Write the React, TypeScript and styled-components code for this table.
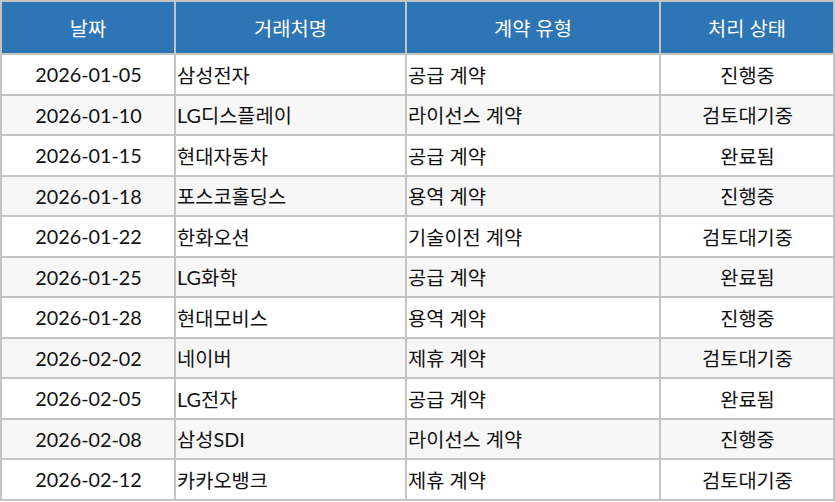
import React from 'react';
import styled, { createGlobalStyle } from 'styled-components';

const GlobalStyle = createGlobalStyle`
	html, body {
		margin: 0;
		padding: 0;
		background: #ffffff;
	}
	body {
		font-family: 'Lato', 'Noto Sans CJK KR', sans-serif;
	}
`;

const Table = styled.table`
	width: 835px;
	border-collapse: collapse;
	border: 2px solid #c4c4c4;
	table-layout: fixed;
	font-size: 19.8px;
	color: #111111;
`;

const HeadCell = styled.th`
	height: 51px;
	padding: 0;
	background: #2e75b6;
	color: #ffffff;
	font-weight: 400;
	font-size: 19.8px;
	text-align: center;
	border: 2px solid #c4c4c4;
`;

const Row = styled.tr<{ $striped: boolean }>`
	background: ${({ $striped }) => ($striped ? '#f7f7f7' : '#ffffff')};
`;

const Cell = styled.td<{ $align?: 'left' | 'center' }>`
	height: 38.5px;
	padding: 0 0 0 1px;
	border: 2px solid #c4c4c4;
	text-align: ${({ $align }) => $align ?? 'center'};
	white-space: nowrap;
`;

type Contract = {
	date: string;
	company: string;
	kind: string;
	status: string;
};

const contracts: Contract[] = [
	{ date: '2026-01-05', company: '삼성전자', kind: '공급 계약', status: '진행중' },
	{ date: '2026-01-10', company: 'LG디스플레이', kind: '라이선스 계약', status: '검토대기중' },
	{ date: '2026-01-15', company: '현대자동차', kind: '공급 계약', status: '완료됨' },
	{ date: '2026-01-18', company: '포스코홀딩스', kind: '용역 계약', status: '진행중' },
	{ date: '2026-01-22', company: '한화오션', kind: '기술이전 계약', status: '검토대기중' },
	{ date: '2026-01-25', company: 'LG화학', kind: '공급 계약', status: '완료됨' },
	{ date: '2026-01-28', company: '현대모비스', kind: '용역 계약', status: '진행중' },
	{ date: '2026-02-02', company: '네이버', kind: '제휴 계약', status: '검토대기중' },
	{ date: '2026-02-05', company: 'LG전자', kind: '공급 계약', status: '완료됨' },
	{ date: '2026-02-08', company: '삼성SDI', kind: '라이선스 계약', status: '진행중' },
	{ date: '2026-02-12', company: '카카오뱅크', kind: '제휴 계약', status: '검토대기중' },
];

export default function App() {
	return (
		<>
			<GlobalStyle />
			<Table>
				<colgroup>
					<col style={{ width: 174 }} />
					<col style={{ width: 231 }} />
					<col style={{ width: 254 }} />
					<col />
				</colgroup>
				<thead>
					<tr>
						<HeadCell>날짜</HeadCell>
						<HeadCell>거래처명</HeadCell>
						<HeadCell>계약 유형</HeadCell>
						<HeadCell>처리 상태</HeadCell>
					</tr>
				</thead>
				<tbody>
					{contracts.map((c, i) => (
						<Row key={c.date} $striped={i % 2 === 1}>
							<Cell>{c.date}</Cell>
							<Cell $align="left">{c.company}</Cell>
							<Cell $align="left">{c.kind}</Cell>
							<Cell>{c.status}</Cell>
						</Row>
					))}
				</tbody>
			</Table>
		</>
	);
}
